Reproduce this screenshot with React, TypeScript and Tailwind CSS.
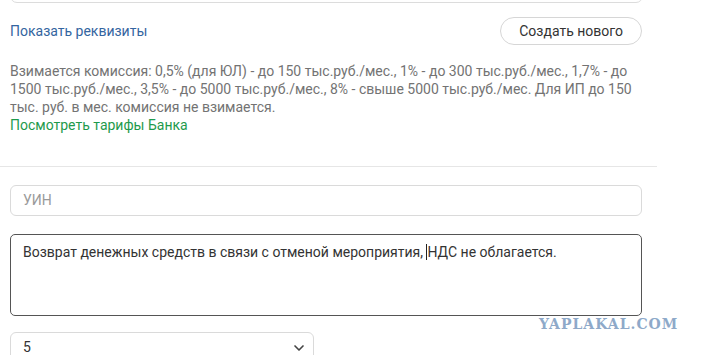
import { ChevronDown } from 'lucide-react';

export default function App() {
  return (
    <div className="relative h-[355px] w-[702px] overflow-hidden bg-white font-['Roboto',sans-serif] text-[14px]">
      <div className="w-[657px]">
        {/* tail of the previous field */}
        <div className="px-[10px]">
          <div className="-mt-[30px] h-[33px] w-[633px] rounded-[7px] border border-[#dcdcdc]" />
        </div>

        {/* requisites row */}
        <div className="mt-[14px] flex w-[652px] items-center justify-between px-[10px]">
          <a className="text-[#3465a0]">Показать реквизиты</a>
          <button className="h-[28px] rounded-full border border-[#d6d6d6] px-[18px] text-[#333]">
            Создать нового
          </button>
        </div>

        {/* commission note */}
        <div className="mt-[17px] w-[642px] px-[10px] leading-[18px] text-[#737373]">
          <p>
            Взимается комиссия: 0,5% (для ЮЛ) - до 150 тыс.руб./мес., 1% - до 300 тыс.руб./мес., 1,7% - до 1500
            тыс.руб./мес., 3,5% - до 5000 тыс.руб./мес., 8% - свыше 5000 тыс.руб./мес. Для ИП до 150 тыс. руб. в мес.
            комиссия не взимается.
          </p>
          <a className="text-[#1e9a4c]">Посмотреть тарифы Банка</a>
        </div>

        <div className="mt-[32px] h-px w-[657px] bg-[#e6e6e6]" />

        {/* form fields */}
        <div className="flex flex-col px-[10px] pt-[18px]">
          <div className="flex h-[31px] w-[632px] items-center rounded-[6px] border border-[#dadada] px-[12px] text-[#9a9a9a]">
            УИН
          </div>
          <div className="mt-[18px] h-[82px] w-[632px] rounded-[5px] border border-[#555] px-[12px] pt-[7px] text-[#333]">
            Возврат денежных средств в связи с отменой мероприятия, <span className="border-l border-[#222]">НДС не облагается.</span>
          </div>
          <div className="mt-[16px] flex h-[31px] w-[304px] items-center justify-between rounded-[6px] border border-[#dadada] pl-[12px] pr-[6px] text-[#333]">
            <span>5</span>
            <ChevronDown size={16} strokeWidth={2.5} className="text-[#444]" />
          </div>
        </div>
      </div>

      <div className="absolute left-[539px] top-[315px] font-['DejaVu_Serif',serif] text-[14px] font-bold leading-[18px] tracking-[1px] text-[#8ea9c9]">
        YAPLAKAL.COM
      </div>
    </div>
  );
}
